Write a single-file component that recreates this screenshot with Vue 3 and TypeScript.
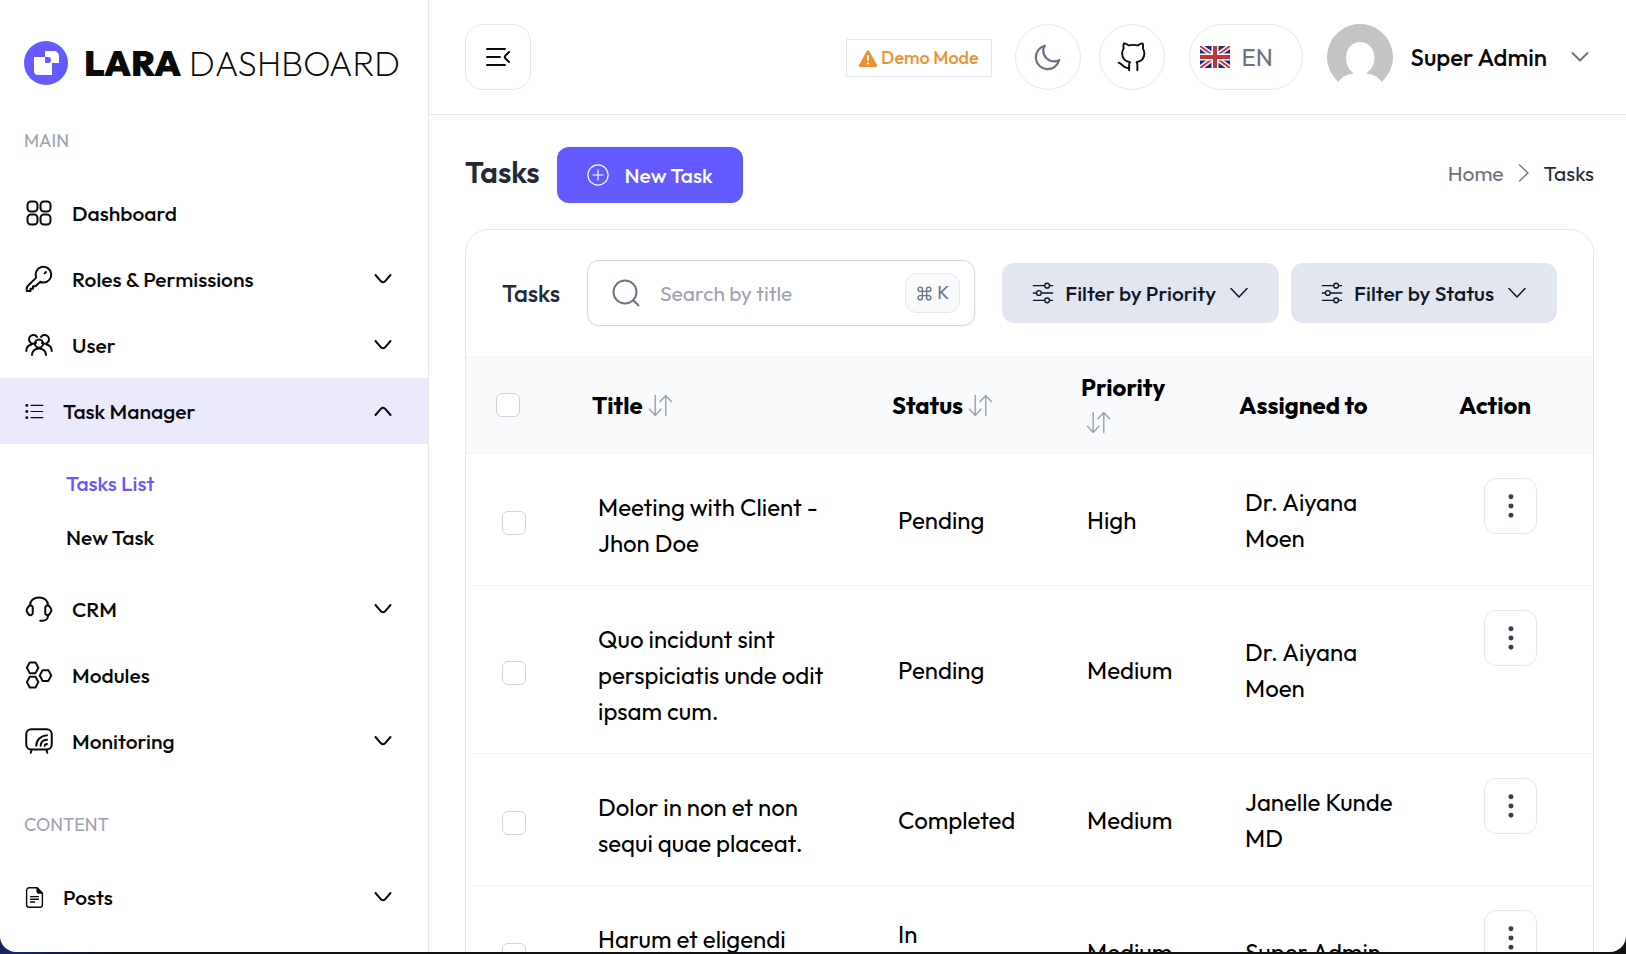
<script setup lang="ts">
import { ref } from 'vue'

interface NavItem {
  label: string
  icon: string
  small?: boolean
  expandable?: boolean
  open?: boolean
  children?: { label: string; active: boolean }[]
}

interface NavGroup {
  heading: string
  items: NavItem[]
}

interface Task {
  title: string
  status: string
  priority: string
  assignee: string
  selected: boolean
}

const icons: Record<string, string> = {
  dashboard:
    '<rect x="2.8" y="2.8" width="8" height="8" rx="2.8"/><rect x="13.2" y="2.8" width="8" height="8" rx="2.8"/><rect x="2.8" y="13.2" width="8" height="8" rx="2.8"/><rect x="13.2" y="13.2" width="8" height="8" rx="2.8"/>',
  key:
    '<path d="M15.5 14.8a6.3 6.3 0 1 0-5.8-3.9L2.8 17.8c-.4.4-.6.9-.6 1.4v2.4h3v-1.8h2v-2h2l3.8-3.6c.8.4 1.6.6 2.5.6Z"/><path d="M17.6 6.4 16.5 7.5"/>',
  users:
    '<path d="M9.6 10.3a3.5 3.5 0 1 1 .8-4.8"/><path d="M14.4 10.3a3.5 3.5 0 1 0-.8-4.8"/><circle cx="12" cy="10.8" r="3.3"/><path d="M6.4 20c0-3.1 2.500-5.200 5.600-5.200s5.600 2.100 5.600 5.200"/><path d="M1.800 16.800c0-2.900 1.800-4.600 4.200-5.200"/><path d="M22.200 16.800c0-2.900-1.800-4.600-4.200-5.200"/>',
  list:
    '<path stroke-width="1.3" d="M8 5h13.5M8 12h13.5M8 19h13.5"/><g fill="currentColor" stroke="none"><circle cx="3.2" cy="5" r="1.7"/><circle cx="3.2" cy="12" r="1.7"/><circle cx="3.2" cy="19" r="1.7"/></g>',
  headset:
    '<path d="M17 10.800c0-.9.300-1.100 1-1.500.9-.4 1.600-.4 2.300.6 2.200 2.600 2.200 3.600 0 6.300-.8 1-1.400 1-2.300.5-.7-.3-1-.6-1-1.500z"/><path d="M7 10.800c0-.9-.3-1.100-1-1.500-.9-.4-1.600-.4-2.300.6-2.200 2.600-2.200 3.600 0 6.300.8 1 1.400 1 2.300.5.7-.3 1-.6 1-1.500z"/><path d="M4.800 9c0-3.700 3.200-6.300 7.200-6.300s7.200 2.600 7.200 6.300"/><path d="M19.200 17v.6c0 2-1.800 3.700-4.200 3.700h-2"/>',
  modules:
    '<path d="M4.600 1.900h4.600l2.300 4.300-2.300 4.300H4.600L2.300 6.200z"/><path d="M4.600 13.400h4.600l2.300 4.300L9.200 22H4.600l-2.300-4.300z"/><path d="M14.900 8.100h4.600l2.300 4.300-2.300 4.300h-4.600l-2.300-4.300z"/>',
  monitor:
    '<rect x="1.8" y="2.5" width="20.4" height="16.3" rx="4"/><path d="M6 19l-.6 2.500M18 19l.6 2.500"/><path d="M9.800 15.800c0-4.600 3.600-8.200 8.600-8.300"/><path d="M13.300 15.800c0-2.600 2-4.700 5.100-4.800"/><path d="M16.600 15.800c.1-.9.800-1.500 1.800-1.500"/>',
  file:
    '<path d="M15 .8H6a3 3 0 0 0-3 3v16.400a3 3 0 0 0 3 3h12a3 3 0 0 0 3-3V7z"/><path fill="currentColor" d="M15 .8 21 7h-4a2 2 0 0 1-2-2z"/><path d="M7.500 11h9M7.500 14h9M7.500 17.200h4.500"/>',
}

const groups = ref<NavGroup[]>([
  {
    heading: 'MAIN',
    items: [
      { label: 'Dashboard', icon: 'dashboard' },
      { label: 'Roles & Permissions', icon: 'key', expandable: true },
      { label: 'User', icon: 'users', expandable: true },
      {
        label: 'Task Manager',
        icon: 'list',
        small: true,
        expandable: true,
        open: true,
        children: [
          { label: 'Tasks List', active: true },
          { label: 'New Task', active: false },
        ],
      },
      { label: 'CRM', icon: 'headset', expandable: true },
      { label: 'Modules', icon: 'modules' },
      { label: 'Monitoring', icon: 'monitor', expandable: true },
    ],
  },
  { heading: 'CONTENT', items: [{ label: 'Posts', icon: 'file', small: true, expandable: true }] },
])

const filters = ['Filter by Priority', 'Filter by Status']

const tasks = ref<Task[]>([
  { title: 'Meeting with Client - Jhon Doe', status: 'Pending', priority: 'High', assignee: 'Dr. Aiyana Moen', selected: false },
  { title: 'Quo incidunt sint perspiciatis unde odit ipsam cum.', status: 'Pending', priority: 'Medium', assignee: 'Dr. Aiyana Moen', selected: false },
  { title: 'Dolor in non et non sequi quae placeat.', status: 'Completed', priority: 'Medium', assignee: 'Janelle Kunde MD', selected: false },
  { title: 'Harum et eligendi', status: 'In\nProgress', priority: 'Medium', assignee: 'Super Admin', selected: false },
])

const search = ref('')
const allSelected = ref(false)

function toggleAll(): void {
  tasks.value.forEach((task) => (task.selected = allSelected.value))
}
</script>

<template>
  <div class="desktop">
    <div class="window">
      <aside class="sidebar">
        <a class="brand" href="#">
          <svg class="brand-mark" viewBox="0 0 44 44" aria-hidden="true">
            <circle cx="22" cy="22" r="22" fill="#635bff" />
            <path fill="#fff" d="M10 16h11v-6h9a5 5 0 0 1 5 5v7h-7v12H14a4 4 0 0 1-4-4z" />
            <path fill="#635bff" d="M21 16h3a3 3 0 0 1 0 6h-3z" />
          </svg>
          <span class="brand-name"><b>LARA</b> DASHBOARD</span>
        </a>
        <nav v-for="group in groups" :key="group.heading" class="group">
          <h3>{{ group.heading }}</h3>
          <ul>
            <li v-for="item in group.items" :key="item.label">
              <button class="nav-item" :class="{ open: item.open }" type="button" @click="item.children && (item.open = !item.open)">
                <svg class="nav-icon" :class="{ small: item.small }" viewBox="0 0 24 24" v-html="icons[item.icon]" />
                <span>{{ item.label }}</span>
                <svg v-if="item.expandable" class="nav-chevron" :class="{ up: item.open }" viewBox="0 0 18 12">
                  <path d="M1.5 2 7 8.300q2 2 4 0L16.500 2" />
                </svg>
              </button>
              <ul v-if="item.open" class="children">
                <li v-for="child in item.children" :key="child.label">
                  <a href="#" :class="{ active: child.active }">{{ child.label }}</a>
                </li>
              </ul>
            </li>
          </ul>
        </nav>
      </aside>

      <div class="main">
        <header class="topbar">
          <button class="toggle" type="button" aria-label="Toggle sidebar">
            <svg viewBox="0 0 24 20"><path d="M1 2h18M1 10h13M1 18h18M23 5l-3.500 3.500q-1.500 1.500 0 3L23 15" /></svg>
          </button>
          <div class="tools">
            <span class="demo">
              <svg viewBox="0 0 18 17"><path fill="#eb9234" d="M7.700.9a1.500 1.500 0 0 1 2.600 0l7.400 13.500A1.500 1.500 0 0 1 16.400 17H1.600a1.500 1.500 0 0 1-1.300-2.600z" /><path fill="#fff" d="M8.100 5.300h1.800v5.500H8.100zM8.100 12.300h1.800v1.900H8.100z" /></svg>
              Demo Mode
            </span>
            <button class="round moon" type="button" aria-label="Dark mode">
              <svg viewBox="0 0 24 24"><path d="M9.500 3A9.500 9.500 0 1 0 21 14.400a8 8 0 0 1-4.200 1.100A8.600 8.600 0 0 1 8.200 7c0-1.600.4-2.800 1.300-4Z" /></svg>
            </button>
            <a class="round" href="#" aria-label="GitHub">
              <svg viewBox="0 0 24 24"><path d="M16.300 22.500v-4.500c0-.9-.3-1.400-.7-1.900c3.400-.6 6.300-2.600 6.300-7.100 0-1.400-.4-2.700-1.200-3.800.4-1.300.3-2.700-.2-4.100-1.500 0-2.700.7-3.900 1.600-2.400-.5-4.800-.5-7.200 0-1.200-.9-2.400-1.600-3.900-1.600-.5 1.400-.6 2.800-.2 4.100-.8 1.100-1.200 2.400-1.200 3.800 0 4.500 2.900 6.500 6.300 7.100-.4.5-.7 1-.7 1.900v4.500" /><path d="M9.700 20.800c-4.500 1-4.800-3.300-8.400-4.300" /></svg>
            </a>
            <button class="language" type="button">
              <svg viewBox="0 0 30 22" aria-hidden="true">
                <path fill="#1c2c80" d="M0 0h30v22H0z" />
                <path stroke="#fff" stroke-width="5" d="m0 0 30 22M30 0 0 22" />
                <path stroke="#c8363e" stroke-width="2" d="m0 0 30 22M30 0 0 22" />
                <path stroke="#fff" stroke-width="7" d="M15 0v22M0 11h30" />
                <path stroke="#c0343a" stroke-width="4" d="M15 0v22M0 11h30" />
              </svg>
              EN
            </button>
            <button class="account" type="button">
              <svg class="avatar" viewBox="0 0 66 66" aria-hidden="true">
                <path fill="#c4c4c4" d="M33 0a33 33 0 0 1 21.500 58C51 52.500 46 50 39 49.500c5-3.500 8.500-8.500 8.500-16 0-8.500-6-15.500-14.300-15.500S19 25 19 33.500c0 7.500 3 12.500 8 16-7 .5-12 3-15.500 8.500A33 33 0 0 1 33 0" />
              </svg>
              Super Admin
              <svg class="account-chevron" viewBox="0 0 18 12"><path d="m1.500 2 7.500 7.500L16.500 2" /></svg>
            </button>
          </div>
        </header>

        <main class="content">
          <div class="page-head">
            <h1>Tasks</h1>
            <button class="new-task" type="button">
              <svg viewBox="0 0 24 24"><circle cx="12" cy="12" r="11" /><path d="M12 6.500v11M6.500 12h11" /></svg>
              New Task
            </button>
            <nav class="crumbs" aria-label="Breadcrumb">
              <a href="#">Home</a>
              <svg viewBox="0 0 12 20"><path d="m1.500 2 8.500 8-8.500 8" /></svg>
              <span>Tasks</span>
            </nav>
          </div>

          <section class="card">
            <div class="card-head">
              <h2>Tasks</h2>
              <div class="search">
                <svg viewBox="0 0 28 28"><circle cx="13" cy="13" r="11.500" /><path d="m21.500 21.500 5 5" /></svg>
                <input v-model="search" type="text" placeholder="Search by title" aria-label="Search by title" />
                <kbd><svg viewBox="0 0 24 24"><path d="M15 6v12a3 3 0 1 0 3-3H6a3 3 0 1 0 3 3V6a3 3 0 1 0-3 3h12a3 3 0 1 0-3-3" /></svg>K</kbd>
              </div>
              <div class="filters">
                <button v-for="filter in filters" :key="filter" class="filter" type="button">
                  <svg viewBox="0 0 24 24"><path d="M1.500 4h12M19.500 4h3M1.500 12h3M10.500 12h12M1.500 20h12M19.500 20h3" /><circle cx="16.500" cy="4" r="2.600" /><circle cx="7.500" cy="12" r="2.600" /><circle cx="16.500" cy="20" r="2.600" /></svg>
                  {{ filter }}
                  <svg class="filter-chevron" viewBox="0 0 18 12"><path d="m1 1.500 8 8.500 8-8.500" /></svg>
                </button>
              </div>
            </div>

            <table>
              <colgroup>
                <col class="c-check" /><col /><col class="c-status" /><col class="c-priority" /><col class="c-assignee" /><col class="c-action" />
              </colgroup>
              <thead>
                <tr>
                  <th class="check"><input v-model="allSelected" type="checkbox" aria-label="Select all tasks" @change="toggleAll" /></th>
                  <th v-for="name in ['Title', 'Status', 'Priority']" :key="name" :class="{ stacked: name === 'Priority' }">
                    <span>{{ name }}</span>
                    <button class="sort" type="button" :aria-label="`Sort by ${name}`">
                      <svg viewBox="0 0 26 24"><path d="M7.500 1.500v21M1.500 16l6 6.500 6-6.500M18.500 22.500v-21M12.500 8l6-6.500 6 6.500" /></svg>
                    </button>
                  </th>
                  <th>Assigned to</th>
                  <th>Action</th>
                </tr>
              </thead>
              <tbody>
                <tr v-for="task in tasks" :key="task.title">
                  <td class="check"><input v-model="task.selected" type="checkbox" :aria-label="`Select ${task.title}`" /></td>
                  <td class="title">{{ task.title }}</td>
                  <td class="status">{{ task.status }}</td>
                  <td>{{ task.priority }}</td>
                  <td>{{ task.assignee }}</td>
                  <td class="action">
                    <button type="button" aria-label="Task actions">
                      <svg viewBox="0 0 6 26"><circle cx="3" cy="3" r="2.700" /><circle cx="3" cy="13" r="2.700" /><circle cx="3" cy="23" r="2.700" /></svg>
                    </button>
                  </td>
                </tr>
              </tbody>
            </table>
          </section>
        </main>
      </div>
    </div>
  </div>
</template>

<style>
body {
  margin: 0;
}
</style>

<style scoped>
* {
  box-sizing: border-box;
}
.desktop {
  height: 100vh;
  padding-bottom: 2px;
  background: linear-gradient(90deg, #1a2560 0, #1a2560 16px, #111 120px);
  color: #0a0a0a;
  font-family: Outfit, Lato, "Open Sans", sans-serif;
  font-size: 21px;
  line-height: 30px;
}
.window {
  display: flex;
  height: 100%;
  overflow: hidden;
  border-radius: 0 0 16px 16px;
  background: #fff;
}
button,
input,
kbd {
  font: inherit;
  color: inherit;
}
button {
  margin: 0;
  padding: 0;
  border: 0;
  background: none;
  cursor: pointer;
}
a {
  color: inherit;
  text-decoration: none;
}
h1,
h2,
h3,
ul {
  margin: 0;
  padding: 0;
  list-style: none;
}
svg {
  display: block;
  flex: none;
  fill: none;
  stroke-linecap: round;
  stroke-linejoin: round;
}

.sidebar {
  flex: none;
  width: 429px;
  border-right: 1px solid #e5e7eb;
  overflow: hidden;
}
.brand {
  display: flex;
  align-items: center;
  gap: 16px;
  height: 124px;
  padding: 40px 0 38px 24px;
}
.brand-mark {
  width: 44px;
  height: 44px;
}
.brand-name {
  font-size: 35px;
  font-weight: 200;
  line-height: 44px;
  white-space: nowrap;
}
.brand-name b {
  font-size: 36px;
  font-weight: 900;
}
.group h3 {
  margin-bottom: 24px;
  padding: 2px 0 0 24px;
  color: #9ca3af;
  font-size: 18px;
  font-weight: 400;
  line-height: 30px;
}
.group + .group {
  margin-top: 34px;
}
.nav-item {
  display: flex;
  align-items: center;
  gap: 18px;
  width: 100%;
  height: 66px;
  padding: 0 36px 0 24px;
  font-weight: 500;
  text-align: left;
}
.nav-item.open {
  background: #ebe9fc;
}
.nav-icon {
  width: 30px;
  height: 30px;
  stroke: currentColor;
  stroke-width: 1.6;
}
.nav-icon.small {
  width: 21px;
  height: 21px;
}
.nav-chevron {
  width: 18px;
  height: 12px;
  margin-left: auto;
  stroke: currentColor;
  stroke-width: 2;
}
.nav-chevron.up {
  transform: rotate(180deg);
}
.children {
  padding: 12px 0;
}
.children a {
  display: block;
  padding: 12px 24px 12px 66px;
  font-weight: 500;
}
.children .active {
  color: #635bff;
}

.main {
  flex: 1;
  min-width: 0;
}
.topbar {
  display: flex;
  align-items: center;
  justify-content: space-between;
  height: 115px;
  padding: 0 37px 0 36px;
  border-bottom: 1px solid #e5e7eb;
}
.toggle,
.round {
  display: flex;
  align-items: center;
  justify-content: center;
  width: 66px;
  height: 66px;
  border: 1px solid #e5e7eb;
  border-radius: 18px;
}
.toggle svg {
  width: 26px;
  height: 20px;
  stroke: #0a0a0a;
  stroke-width: 2;
}
.tools {
  display: flex;
  align-items: center;
}
.demo {
  display: flex;
  align-items: center;
  gap: 4px;
  height: 38px;
  margin: 2px 23px 0 0;
  padding: 0 12px;
  border: 1px solid #e5e7eb;
  color: #eb9234;
  font-size: 18px;
  font-weight: 500;
}
.demo svg {
  width: 18px;
  height: 17px;
}
.round {
  margin-right: 18px;
  border-radius: 50%;
}
.round svg {
  width: 30px;
  height: 30px;
  stroke: #0a0a0a;
  stroke-width: 1.5;
}
.moon svg {
  stroke: #6b7280;
  stroke-width: 1.8;
}
.language {
  display: flex;
  align-items: center;
  gap: 12px;
  width: 114px;
  height: 66px;
  margin: 0 24px 0 6px;
  padding: 0 12px 0 10px;
  border: 1px solid #e5e7eb;
  border-radius: 33px;
  color: #6b7280;
  font-size: 24px;
}
.language svg {
  width: 30px;
  height: 22px;
}
.account {
  display: flex;
  align-items: center;
  gap: 18px;
  font-size: 24px;
  font-weight: 500;
}
.avatar {
  width: 66px;
  height: 66px;
}
.account-chevron {
  width: 18px;
  height: 12px;
  margin-left: 6px;
  stroke: #6b7280;
  stroke-width: 2;
}

.content {
  padding: 32px 32px 32px 36px;
}
.page-head {
  display: flex;
  align-items: flex-start;
  gap: 17px;
  margin-bottom: 26px;
}
h1 {
  color: #1f2937;
  font-size: 30px;
  font-weight: 600;
  line-height: 50px;
}
.new-task {
  display: flex;
  align-items: center;
  gap: 16px;
  height: 56px;
  padding: 0 30px;
  border-radius: 12px;
  background: #635bff;
  color: #fff;
  font-weight: 500;
}
.new-task svg {
  width: 22px;
  height: 22px;
  stroke: #fff;
  stroke-width: 1.3;
}
.crumbs {
  display: flex;
  align-items: center;
  gap: 14px;
  height: 52px;
  margin-left: auto;
  color: #1f2937;
}
.crumbs a {
  color: #6b7280;
}
.crumbs svg {
  width: 12px;
  height: 20px;
  stroke: #6b7280;
  stroke-width: 1.3;
}

.card {
  border: 1px solid #e5e7eb;
  border-radius: 24px;
  overflow: hidden;
}
.card-head {
  display: flex;
  align-items: center;
  height: 126px;
  padding: 0 36px;
}
h2 {
  margin-right: 27px;
  color: #1f2937;
  font-size: 24px;
  font-weight: 500;
  line-height: 36px;
}
.search {
  display: flex;
  align-items: center;
  flex: 1;
  min-width: 0;
  height: 66px;
  padding: 0 14px 0 24px;
  border: 1px solid #d1d5db;
  border-radius: 12px;
  box-shadow: 0 1px 2px rgba(0, 0, 0, 0.05);
}
.search > svg {
  width: 28px;
  height: 28px;
  stroke: #6b7280;
  stroke-width: 2;
}
.search input {
  flex: 1;
  min-width: 0;
  padding: 0 0 0 20px;
  border: 0;
  outline: 0;
  background: none;
}
.search input::placeholder {
  color: #9ca3af;
  opacity: 1;
}
kbd {
  display: flex;
  align-items: center;
  gap: 4px;
  height: 40px;
  padding: 0 10px;
  border: 1px solid #e5e7eb;
  border-radius: 12px;
  background: #f9fafb;
  color: #6b7280;
  font-size: 18px;
}
kbd svg {
  width: 17px;
  height: 17px;
  stroke: currentColor;
  stroke-width: 2;
}
.filters {
  display: flex;
  gap: 12px;
  margin-left: 27px;
}
.filter {
  display: flex;
  align-items: center;
  gap: 11px;
  height: 60px;
  padding: 0 31px 0 30px;
  border-radius: 12px;
  background: #e2e6ef;
  color: #0f172a;
  font-weight: 500;
}
.filter svg {
  width: 22px;
  height: 22px;
  stroke: currentColor;
  stroke-width: 1.5;
}
.filter .filter-chevron {
  width: 18px;
  height: 12px;
  margin-left: 3px;
}

table {
  width: 100%;
  table-layout: fixed;
  border-collapse: collapse;
  color: #000;
  font-size: 24px;
  line-height: 36px;
}
.c-check {
  width: 102px;
}
.c-status {
  width: 189px;
}
.c-priority,
.c-action {
  width: 158px;
}
.c-assignee {
  width: 220px;
}
th {
  height: 97px;
  padding: 0 24px;
  border-top: 1px solid #f3f4f6;
  background: #f9fafb;
  font-weight: 700;
  text-align: left;
  white-space: nowrap;
}
.sort {
  display: inline-block;
  margin-left: 5px;
  padding-bottom: 6px;
  vertical-align: middle;
}
.sort svg {
  width: 25px;
  height: 23px;
  stroke: #9ca3af;
  stroke-width: 1.5;
}
.stacked span {
  display: block;
}
.stacked .sort {
  display: block;
  padding: 6px 0 7px;
}
tr {
  border-bottom: 1px solid #f3f4f6;
}
td {
  height: 132px;
  padding: 1px 30px 0;
  vertical-align: middle;
}
th.check {
  padding-left: 30px;
}
td.check {
  padding: 6px 0 0 36px;
}
.check input {
  display: block;
  width: 24px;
  height: 24px;
  margin: 0;
  border: 1px solid #d1d5db;
  border-radius: 6px;
  background: #fff;
  appearance: none;
}
.check input:checked {
  background: #635bff;
}
td.title {
  padding-top: 35px;
  padding-bottom: 24px;
  vertical-align: top;
}
td.status {
  white-space: pre-line;
}
td.action {
  padding: 24px 0 0 49px;
  vertical-align: top;
}
.action button {
  display: flex;
  align-items: center;
  justify-content: center;
  width: 53px;
  height: 56px;
  border: 1px solid #e5e7eb;
  border-radius: 12px;
}
.action svg {
  width: 6px;
  height: 24px;
  fill: #374151;
}
</style>
